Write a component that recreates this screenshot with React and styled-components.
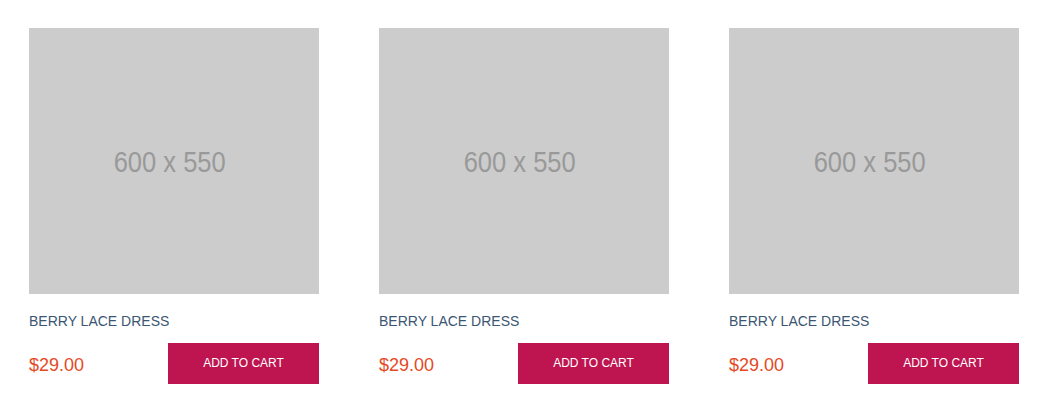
import React from "react";
import styled, { createGlobalStyle } from "styled-components";

const GlobalStyle = createGlobalStyle`
  body {
    margin: 0;
    background: #fff;
    font-family: "Liberation Sans", Arial, sans-serif;
  }
`;

const Grid = styled.div`
  display: grid;
  grid-template-columns: repeat(3, 290px);
  column-gap: 60px;
  padding: 28px 27px 0 29px;
`;

const Card = styled.div`
  display: flex;
  flex-direction: column;
`;

const Thumb = styled.div`
  height: 266px;
  background: #cccccc;
  display: flex;
  align-items: center;
  justify-content: center;
  overflow: hidden;
`;

const ThumbLabel = styled.span`
  font-size: 29px;
  color: #999999;
  transform: scaleX(0.88);
  white-space: nowrap;
  margin-right: 8px;
  margin-top: 2px;
`;

const Title = styled.a`
  margin-top: 19px;
  font-size: 14px;
  line-height: 16px;
  color: #3b5673;
  text-decoration: none;
`;

const Row = styled.div`
  margin-top: 14px;
  display: flex;
  align-items: center;
  justify-content: space-between;
`;

const Price = styled.span`
  font-size: 18px;
  color: #e5491f;
  padding-top: 3px;
`;

const CartButton = styled.button`
  width: 151px;
  height: 41px;
  border: none;
  background: #be1550;
  color: #fff;
  font-family: "Liberation Sans", Arial, sans-serif;
  font-size: 12px;
  text-transform: uppercase;
  padding: 0 0 2px;
  cursor: pointer;
`;

const products = [
  { name: "Berry Lace Dress", price: "$29.00" },
  { name: "Berry Lace Dress", price: "$29.00" },
  { name: "Berry Lace Dress", price: "$29.00" },
];

export default function App() {
  return (
    <>
      <GlobalStyle />
      <Grid>
        {products.map((p, i) => (
          <Card key={i}>
            <Thumb>
              <ThumbLabel>600 x 550</ThumbLabel>
            </Thumb>
            <Title href="#">{p.name.toUpperCase()}</Title>
            <Row>
              <Price>{p.price}</Price>
              <CartButton>Add to cart</CartButton>
            </Row>
          </Card>
        ))}
      </Grid>
    </>
  );
}
